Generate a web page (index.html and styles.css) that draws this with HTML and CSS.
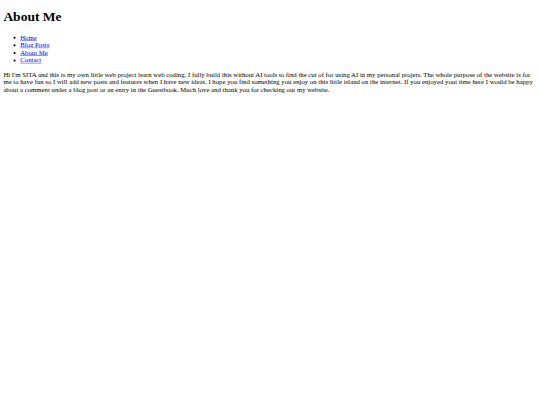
FILE: index.html
```html
<!DOCTYPE html>
<html lang="en" class="page">
<head>
<meta charset="utf-8">
<title>About Me</title>
<link rel="stylesheet" href="styles.css">
</head>
<body class="body">
<div class="canvas">
<h1 class="title">About Me</h1>
<nav class="nav">
<ul class="nav-list">
<li><a href="#">Home</a></li>
<li><a href="#">Blog Posts</a></li>
<li><a href="#">About Me</a></li>
<li><a href="#">Contact</a></li>
</ul>
</nav>
<p class="text">Hi I'm SITA and this is my own little web project learn web coding. I fully build this without AI tools to find the cut of for using AI in my personal projets. The whole purpose of the website is for me to have fun so I will add new posts and features when I have new ideas. I hope you find something you enjoy on this little island on the internet. If you enjoyed yout time here I would be happy about a comment under a blog post or an entry in the Guestbook. Much love and thank you for checking out my website.</p>
</div>
</body>
</html>
```
FILE: styles.css
```css
.page {
  background: #ffffff;
  overflow: hidden;
}
.body {
  margin: 0;
  overflow: hidden;
}
.canvas {
  display: flow-root;
  width: 1280px;
  box-sizing: border-box;
  padding: 0 8px;
  transform: scale(0.421875);
  transform-origin: 0 0;
  font-family: "Liberation Serif", "Times New Roman", serif;
  font-size: 16px;
  color: #000000;
}
.title {
  font-size: 32px;
  font-weight: bold;
  margin: 21.44px 0;
}
.nav-list {
  margin: 16px 0;
  padding-left: 40px;
}
.nav-list a {
  color: #0000ee;
}
.text {
  margin: 16px 0;
}
```
